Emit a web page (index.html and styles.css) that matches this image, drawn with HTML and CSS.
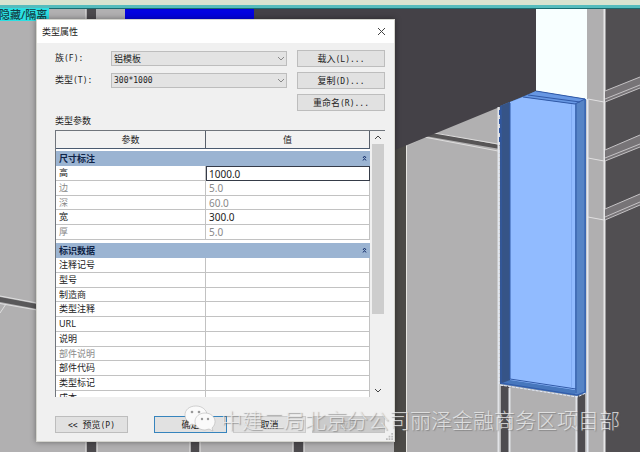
FILE: index.html
```html
<!DOCTYPE html>
<html lang="zh-CN">
<head>
<meta charset="utf-8">
<title>类型属性</title>
<link rel="stylesheet" href="styles.css">
</head>
<body>
<main class="desktop">
  <svg class="scene" viewBox="0 0 640 452" preserveAspectRatio="none" aria-hidden="true">
    <rect width="640" height="452" fill="#b1b0b1"/>
    <!-- left wall and floor joints -->
    <path d="M0 297L37 304V309L0 302Z" fill="#59585a"/>
    <path d="M0 296L37 303M0 303.500L37 310M0 313L6 304" stroke="#dededf" fill="none"/>
    <path d="M87 8H96V20H87ZM87 440H96V452H87ZM191 440H199V452H191ZM294 440H303V452H294Z" fill="#4c4a4d"/>
    <path d="M85.500 8V20M85.500 440V452M97.500 440V452M189.500 440V452M200.500 440V452M292.500 440V452M304.500 440V452" stroke="#cbcaca"/>
    <path d="M125 8H254V20H125Z" fill="#0202e0"/>
    <!-- dark column and the panel beside it -->
    <path d="M394 140H406V452H394Z" fill="#4c4a47"/>
    <path d="M406.500 142V452" stroke="#e7e6e2"/>
    <path d="M425 136L436 133L500 145V149Z" fill="#575556"/>
    <path d="M434 133L498 144M424 137L498 151" stroke="#dedddd" fill="none"/>
    <path d="M407 146L425 137" stroke="#bcbbbb"/>
    <path d="M254 8H536V92L395 150V20H254Z" fill="#444147"/>
    <!-- opening and right wall -->
    <path d="M536 8H587V100L536 92Z" fill="#f8ffff"/>
    <path d="M587 8H604V452H587Z" fill="#b0afb0"/>
    <path d="M605 8H640V452H605Z" fill="#514f52"/>
    <path d="M604.500 8V452" stroke="#e7e7e8" stroke-width="2"/>
    <path d="M587.500 99V452" stroke="#e4e8ef" stroke-width="2"/>
    <path d="M588 99L604 102M588 158L604 161M588 217L604 220" stroke="#e1e0e1"/>
    <g fill="#777477">
      <path d="M605 91L640 77V88L605 102Z"/>
      <path d="M605 150L640 135V147L605 161Z"/>
      <path d="M605 209L640 194V205L605 220Z"/>
    </g>
    <g stroke="#c5c3c5" fill="none">
      <path d="M605 91L640 77M605 99L640 85M605 102L640 88"/>
      <path d="M605 150L640 135M605 158L640 144M605 161L640 147"/>
      <path d="M605 209L640 194M605 217L640 202M605 220L640 205"/>
    </g>
    <!-- legs under the selected panel -->
    <path d="M501 386H509V452H501ZM577 394H585V452H577Z" fill="#4e4c50"/>
    <path d="M498.500 107V452M509.500 388V452M576.500 395V452" stroke="#e2e3e7" stroke-width="2"/>
    <!-- selected formwork panel -->
    <path d="M500 106L536 91L586 99V393L577 396L500 384Z" fill="#4777bd"/>
    <path d="M500 106L510 102V380L500 384Z" fill="#365487"/>
    <path d="M510 102L523 97L575 104V390L510 380Z" fill="#91bbff"/>
    <path d="M575 104L585 99V392L575 395Z" fill="#5684c6"/>
    <path d="M523 97L536 91L585 99L575 104Z" fill="#6797e3"/>
    <path d="M523 97L575 104L585 99M528 95L580 102M536 91L585 99V392L577 395L501 383V106M576 104V393M510 103V379L576 389" stroke="#315aa8" fill="none"/>
    <path d="M571.500 104V388" stroke="#7faaf2"/>
    <path d="M499 110V384M500 385L577 397L586 393" stroke="#e5ecfa" stroke-dasharray="3 1" fill="none"/>
    <path d="M500 110V145" stroke="#3056a0" stroke-width="2" stroke-dasharray="5 4"/>
    <!-- toolbar edge -->
    <rect width="640" height="5" fill="#d8e3d0"/>
    <rect y="5" width="640" height="3" fill="#55bcbd"/>
    <rect y="8" width="640" height="1" fill="#176c70"/>
  </svg>
  <div class="mode">隐藏/隔离</div>

  <form class="dialog">
    <header class="titlebar">
      <h1>类型属性</h1>
      <button type="button" class="close" aria-label="关闭"><svg viewBox="0 0 9 9"><path d="M1 1L8 8M8 1L1 8"/></svg></button>
    </header>
    <div class="content">
      <div class="fields">
        <label for="family">族<span class="latin">(F):</span></label>
        <div class="picker"><select id="family"><option>铝模板</option></select><svg viewBox="0 0 8 5"><path d="M1 1L4 4L7 1"/></svg></div>
        <button type="button">载入<span class="latin">(L)...</span></button>
        <label for="type">类型<span class="latin">(T):</span></label>
        <div class="picker"><select id="type" class="latin"><option>300*1000</option></select><svg viewBox="0 0 8 5"><path d="M1 1L4 4L7 1"/></svg></div>
        <button type="button">复制<span class="latin">(D)...</span></button>
        <button type="button" class="rename">重命名<span class="latin">(R)...</span></button>
      </div>
      <h2>类型参数</h2>
      <div class="pane">
        <table>
          <thead><tr><th>参数</th><th>值</th></tr></thead>
          <tbody>
            <tr class="group"><th colspan="2"><div>尺寸标注<svg viewBox="0 0 5 6"><path d="M1 3L2.500 1L4 3M1 5.500L2.500 3.500L4 5.500"/></svg></div></th></tr>
            <tr><td><label for="height">高</label></td><td class="active"><input id="height" value="1000.0"></td></tr>
            <tr class="off"><td>边</td><td>5.0</td></tr>
            <tr class="off"><td>深</td><td>60.0</td></tr>
            <tr><td>宽</td><td>300.0</td></tr>
            <tr class="off"><td>厚</td><td>5.0</td></tr>
          </tbody>
          <tbody>
            <tr class="group"><th colspan="2"><div>标识数据<svg viewBox="0 0 5 6"><path d="M1 3L2.500 1L4 3M1 5.500L2.500 3.500L4 5.500"/></svg></div></th></tr>
            <tr><td>注释记号</td><td></td></tr>
            <tr><td>型号</td><td></td></tr>
            <tr><td>制造商</td><td></td></tr>
            <tr><td>类型注释</td><td></td></tr>
            <tr><td>URL</td><td></td></tr>
            <tr><td>说明</td><td></td></tr>
            <tr class="off"><td>部件说明</td><td></td></tr>
            <tr><td>部件代码</td><td></td></tr>
            <tr><td>类型标记</td><td></td></tr>
            <tr><td>成本</td><td></td></tr>
          </tbody>
        </table>
        <div class="scrollbar">
          <svg viewBox="0 0 8 5"><path d="M1 4L4 1L7 4"/></svg>
          <div class="track"><div class="thumb"></div></div>
          <svg viewBox="0 0 8 5"><path d="M1 1L4 4L7 1"/></svg>
        </div>
      </div>
      <footer class="actions">
        <button type="button" class="preview"><span class="latin">&lt;&lt; </span>预览<span class="latin">(P)</span></button>
        <button type="button" class="ok">确定</button>
        <button type="button" class="cancel">取消</button>
        <button type="button" class="apply" disabled>应用</button>
      </footer>
    </div>
    <svg class="grip" viewBox="0 0 8 8"><path d="M6 0h2v2H6zM3 3h2v2H3zM6 3h2v2H6zM0 6h2v2H0zM3 6h2v2H3zM6 6h2v2H6z"/></svg>
  </form>

  <div class="watermark">
    <svg viewBox="0 0 32 28" aria-hidden="true">
      <path class="bubble" d="M12 1C5 1 1 5 1 10c0 3 1 5 4 7l-1 4 4-2c2 1 4 1 6 1C20 20 23 15 23 10S18 1 12 1Z"/>
      <path class="bubble" d="M21 8c-6 0-10 4-10 8.500S15 25 21 25l4-1 4 2-1-3c2-2 3-4 3-6.500C31 12 27 8 21 8Z"/>
      <g class="eyes"><circle cx="8" cy="7" r="1.300"/><circle cx="15" cy="7" r="1.300"/><circle cx="18" cy="14" r="1.200"/><circle cx="24" cy="14" r="1.200"/></g>
    </svg>
    <span>中建二局北京分公司丽泽金融商务区项目部</span>
  </div>
</main>
</body>
</html>
```

FILE: styles.css
```css
* { box-sizing: border-box; }

body {
  margin: 0;
  font: 9px/12px "Noto Sans", "Noto Sans CJK SC", sans-serif;
  color: #222;
}

h1, h2 { margin: 0; font-weight: 400; }

button, select, input {
  margin: 0;
  padding: 0;
  font: inherit;
  color: inherit;
}

svg { display: block; flex: none; fill: none; stroke: #444; }

.desktop {
  position: relative;
  min-height: 100vh;
  overflow: hidden;
}

.scene {
  position: absolute;
  inset: 0;
  width: 100%;
  height: 100%;
  stroke: none;
}

.mode {
  position: absolute;
  top: 8px;
  left: 0;
  padding-right: 2px;
  background: #2cdfe2;
  color: #123f48;
  font-size: 11px;
  font-weight: 500;
  line-height: 13px;
  text-indent: -1px;
}

.dialog {
  position: absolute;
  top: 19px;
  left: 36px;
  right: 245px;
  border: 1px solid #d4d4ce;
  background: #f0f0f0;
  box-shadow: 0 0 6px #0006;
}

.titlebar {
  display: flex;
  align-items: center;
  justify-content: space-between;
  height: 23px;
  padding: 0 8px 0 5px;
  background: #fff;
}

.titlebar h1 { font-size: 9px; }

.close {
  border: 0;
  background: none;
}

.close svg { width: 9px; height: 9px; }

.content { padding: 7px 9px 8px 18px; }

.fields {
  display: grid;
  grid-template-columns: 56px 1fr 88px;
  grid-auto-rows: 17px;
  gap: 5px 0;
  align-items: center;
}

.latin,
.picker .latin { font-family: "DejaVu Sans Mono", monospace; font-size: 8px; }

.content button {
  height: 17px;
  border: 1px solid #bdbdbd;
  background: #e1e1e1;
  line-height: 15px;
  white-space: pre;
}

.content .rename { grid-column: 3; }

.picker {
  position: relative;
  margin-right: 10px;
}

.picker select {
  display: block;
  width: 100%;
  height: 15px;
  padding-left: 2px;
  border: 1px solid #bdbdbd;
  border-radius: 0;
  background: #e3e3e3;
  appearance: none;
}

.picker svg {
  position: absolute;
  top: 5px;
  right: 2px;
  width: 8px;
  height: 5px;
  stroke: #888;
}

h2 { margin: 4px 0 3px; font-size: 9px; }

.pane {
  display: flex;
  height: 267px;
  overflow: hidden;
  border-top: 1px solid #70757c;
  border-left: 1px solid #70757c;
}

table {
  flex: 1;
  height: max-content;
  border-spacing: 0;
  table-layout: fixed;
}

thead th {
  height: 18px;
  padding: 0;
  border-right: 1px solid #59606b;
  border-bottom: 1px solid #4a5a70;
  background: #f2f2f2;
  font-weight: 400;
}

thead th:first-child { width: 150px; }

tbody { background: #fff; }

td {
  height: 15px;
  padding: 0 0 0 3px;
  border-right: 1px solid #c2c2c2;
  border-bottom: 1px solid #c2c2c2;
  line-height: 12px;
}

tr:nth-child(4n) td { height: 14px; }

td + td { font-size: 10px; }

.off { color: #898989; }

.group th {
  height: 18px;
  padding: 0;
  border-top: 3px solid #fff;
  background: #9bb4d2;
  background-clip: padding-box;
  color: #102448;
  line-height: 12px;
  text-align: left;
}

thead + tbody .group th {
  height: 17px;
  border-top-width: 2px;
}

.group div {
  display: flex;
  justify-content: space-between;
  padding: 0 3px;
}

.group svg {
  width: 5px;
  height: 6px;
  margin-top: 2px;
  stroke: #142f6b;
}

td.active {
  padding-left: 2px;
  border: 1px solid #353b48;
}

td input {
  display: block;
  width: 100%;
  height: 12px;
  border: 0;
  outline: 0;
  background: none;
}

.scrollbar {
  display: flex;
  flex-direction: column;
  align-items: center;
  width: 15px;
  padding: 4px 0;
}

.scrollbar svg { width: 8px; height: 5px; }

.track {
  flex: 1;
  width: 12px;
  padding: 4px 0;
}

.thumb { height: 71%; background: #cdcdcd; }

.actions {
  display: flex;
  gap: 6px;
  margin-top: 19px;
}

.actions button { flex: 1; }

.actions .preview { margin-right: 20px; }

.actions .ok { border-color: #3684bd; }

.actions .cancel { border-color: #ccc; }

.actions .apply { border-color: #c4c4c4; background: #cbcbcb; color: #aaa; }

.grip {
  position: absolute;
  right: 1px;
  bottom: 1px;
  width: 7px;
  height: 7px;
  fill: #bbb;
  stroke: none;
}

.watermark {
  position: absolute;
  top: 405px;
  left: 184px;
  display: flex;
  align-items: center;
  gap: 5px;
  color: #eeeeeecc;
  font: 21px/28px "Noto Sans CJK SC", sans-serif;
  font-weight: 300;
  white-space: nowrap;
  text-shadow: 1px 1px 1px #6668;
  pointer-events: none;
}

.watermark svg { width: 32px; height: 28px; }

.bubble { fill: #fafafa; stroke: #aaa; stroke-width: 0.5; }

.eyes { fill: #999; stroke: none; }
```
